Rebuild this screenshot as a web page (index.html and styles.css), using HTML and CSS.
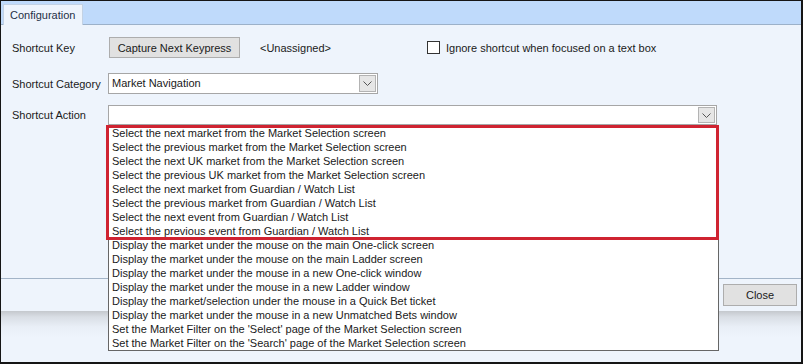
FILE: index.html
```html
<!DOCTYPE html>
<html lang="en">
<head>
    <meta charset="UTF-8">
    <title>Configuration</title>
    <link rel="stylesheet" href="styles.css">
</head>
<body>
    <div class="window">
        <div class="tabstrip">
            <div class="tab">Configuration</div>
        </div>

        <div class="panel">
            <div class="row row-key">
                <span class="label">Shortcut Key</span>
                <button class="btn capture">Capture Next Keypress</button>
                <span class="unassigned">&lt;Unassigned&gt;</span>
                <label class="check"><span class="box"></span>Ignore shortcut when focused on a text box</label>
            </div>
            <div class="row row-category">
                <span class="label">Shortcut Category</span>
                <div class="combo combo-category">
                    <span class="value">Market Navigation</span>
                    <span class="arrow"><svg width="9" height="5" viewBox="0 0 9 5"><path d="M0.5 0.5 L4.5 4.5 L8.5 0.5" fill="none" stroke="#555" stroke-width="1"/></svg></span>
                </div>
            </div>
            <div class="row row-action">
                <span class="label">Shortcut Action</span>
                <div class="combo combo-action">
                    <span class="value"></span>
                    <span class="arrow"><svg width="9" height="5" viewBox="0 0 9 5"><path d="M0.5 0.5 L4.5 4.5 L8.5 0.5" fill="none" stroke="#555" stroke-width="1"/></svg></span>
                </div>
            </div>
        </div>

        <div class="buttonbar">
            <button class="btn close">Close</button>
        </div>
        <div class="shadow"></div>

        <!-- open dropdown of Shortcut Action -->
        <ul class="droplist">
            <li>Select the next market from the Market Selection screen</li>
            <li>Select the previous market from the Market Selection screen</li>
            <li>Select the next UK market from the Market Selection screen</li>
            <li>Select the previous UK market from the Market Selection screen</li>
            <li>Select the next market from Guardian / Watch List</li>
            <li>Select the previous market from Guardian / Watch List</li>
            <li>Select the next event from Guardian / Watch List</li>
            <li>Select the previous event from Guardian / Watch List</li>
            <li>Display the market under the mouse on the main One-click screen</li>
            <li>Display the market under the mouse on the main Ladder screen</li>
            <li>Display the market under the mouse in a new One-click window</li>
            <li>Display the market under the mouse in a new Ladder window</li>
            <li>Display the market/selection under the mouse in a Quick Bet ticket</li>
            <li>Display the market under the mouse in a new Unmatched Bets window</li>
            <li>Set the Market Filter on the 'Select' page of the Market Selection screen</li>
            <li>Set the Market Filter on the 'Search' page of the Market Selection screen</li>
        </ul>
        <div class="highlight"></div>
    </div>
</body>
</html>
```

FILE: styles.css
```css
body {
    margin: 0;
    font-family: 'Liberation Sans', Arial, sans-serif;
    font-size: 11px;
    color: #1a1a1a;
    background-color: #eef4fc;
}

.window {
    position: relative;
    width: 803px;
    height: 364px;
    box-sizing: border-box;
    border: 1px solid #151515;
    border-right-width: 2px;
    border-bottom-width: 2px;
    display: flex;
    flex-direction: column;
    background-color: #eef4fc;
}

.tabstrip {
    flex: 0 0 23px;
    display: flex;
    align-items: flex-end;
    background-color: #bfdafb;
    border-bottom: 1px solid #9cb1c9;
}

.tab {
    margin: 0 0 -1px 2px;
    width: 80px;
    height: 21px;
    box-sizing: border-box;
    padding: 4px 0 0 6px;
    background-color: #eef4fc;
    border: 1px solid #c3d2e4;
    border-bottom: none;
    color: #1f3046;
}

.panel {
    flex: 0 0 254px;
    box-sizing: border-box;
    padding: 12px 0 0 11px;
    border-bottom: 1px solid #a3b4c7;
}

.row {
    display: flex;
    align-items: center;
}

.label {
    width: 96px;
    flex: none;
}

.btn {
    font: inherit;
    color: #1a1a1a;
    background-color: #e1e1e1;
    border: 1px solid #adadad;
    padding: 0;
    height: 21px;
}

.capture {
    margin-left: 1px;
    width: 131px;
}

.unassigned {
    margin-left: 20px;
}

.check {
    display: flex;
    align-items: center;
    margin-left: 96px;
}

.check .box {
    width: 13px;
    height: 13px;
    box-sizing: border-box;
    border: 1px solid #333;
    background: #fff;
    margin-right: 6px;
}

.row-category {
    margin-top: 15px;
}

.row-action {
    margin-top: 11px;
}

.combo {
    display: flex;
    align-items: stretch;
    box-sizing: border-box;
    height: 21px;
    background: #fff;
    border: 1px solid #a6a6a6;
}

.combo-category {
    width: 270px;
}

.combo-action {
    width: 609px;
    height: 20px;
}

.combo .value {
    flex: 1;
    padding-left: 3px;
    line-height: 19px;
}

.combo .arrow {
    width: 17px;
    margin: 1px;
    box-sizing: border-box;
    border: 1px solid #b3b3b3;
    background-color: #e6e6e6;
    display: flex;
    align-items: center;
    justify-content: center;
}

.buttonbar {
    flex: 0 0 32px;
    box-sizing: border-box;
    display: flex;
    justify-content: flex-end;
    padding: 5px 4px 0 0;
}

.close {
    width: 74px;
    height: 22px;
}

.shadow {
    flex: 1;
    background: linear-gradient(#c4c8cd 0, #d9dee5 6px, #e9eff7 16px, #eef4fc 26px);
}

.droplist {
    position: absolute;
    left: 107px;
    top: 124px;
    width: 611px;
    box-sizing: border-box;
    margin: 0;
    padding: 0;
    list-style: none;
    background: #fff;
    border: 1px solid #666;
}

.droplist li {
    height: 14px;
    line-height: 15px;
    padding-left: 3px;
    white-space: nowrap;
}

.highlight {
    position: absolute;
    left: 105px;
    top: 124px;
    width: 613px;
    height: 115px;
    box-sizing: border-box;
    border: 3px solid #cf2331;
}
```
